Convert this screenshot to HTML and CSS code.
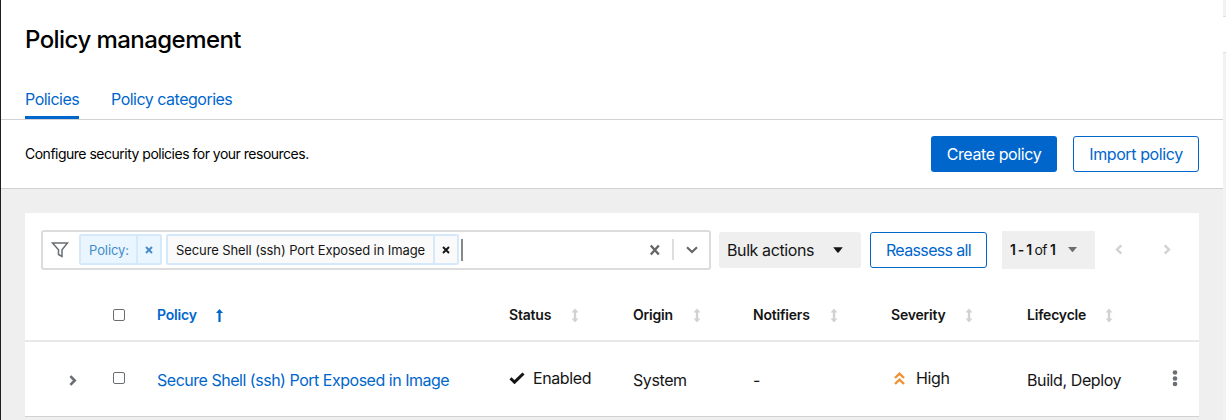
FILE: index.html
```html
<!DOCTYPE html>
<html lang="en">
<head>
<meta charset="utf-8">
<title>Policy management</title>
<link rel="stylesheet" href="styles.css">
</head>
<body>
<svg width="0" height="0" class="defs">
  <symbol id="sort" viewBox="0 0 8 15"><path d="M4 .5L7.500 4.500H5.200v6H7.500L4 14.500.5 10.500h2.300v-6H.5z"/></symbol>
</svg>
<div class="shell">
  <main class="page">
    <header class="head">
      <h1 class="title"><span>Policy management</span></h1>
      <nav class="tabs">
        <a class="tab active"><span class="t-policies">Policies</span></a>
        <a class="tab"><span class="t-cats">Policy categories</span></a>
      </nav>
    </header>
    <section class="intro">
      <p class="desc">Configure security policies for your resources.</p>
      <button class="btn primary">Create policy</button>
      <button class="btn outline import">Import policy</button>
    </section>
    <section class="body">
      <div class="card">
        <div class="toolbar">
          <div class="search">
            <svg class="funnel" width="18" height="16" viewBox="0 0 18 16"><path d="M1.500 1h15L11 7.700v6.800L7.500 12.500V7.700z" fill="none" stroke="#6a6e73" stroke-width="1.500"/></svg>
            <span class="chip cat"><span class="chip-text">Policy:</span><span class="chip-x"><svg width="8" height="8" viewBox="0 0 8 8"><path d="M1 1l6 6M7 1L1 7"/></svg></span></span>
            <span class="chip val"><span class="chip-text">Secure Shell (ssh) Port Exposed in Image</span><span class="chip-x"><svg width="8" height="8" viewBox="0 0 8 8"><path d="M1 1l6 6M7 1L1 7"/></svg></span></span>
            <span class="caret"></span>
            <svg class="clear" width="12" height="12" viewBox="0 0 12 12"><path d="M1.800 1.500l8 9M9.800 1.500l-8 9" stroke="#666" stroke-width="2.400"/></svg>
            <span class="sep"></span>
            <svg class="down" width="12" height="8" viewBox="0 0 12 8"><path d="M1 1.300l5 4.700 5-4.700" fill="none" stroke="#666" stroke-width="2.200"/></svg>
          </div>
          <button class="bulk"><span>Bulk actions</span><svg width="10" height="6" viewBox="0 0 10 6"><path d="M.2.300h9.600L5.600 5.500q-.6.600-1.200 0z" fill="#151515"/></svg></button>
          <button class="btn outline reassess">Reassess all</button>
          <button class="range"><span><b>1 - 1</b> of <b>1</b></span><svg width="9" height="5" viewBox="0 0 9 5"><path d="M0 0h9L5 4.700q-.5.500-1 0z" fill="#6a6e73"/></svg></button>
          <svg class="prev" width="8" height="11" viewBox="0 0 8 11"><path d="M6.300 1.300L2 5.500l4.300 4.200" fill="none" stroke="#d2d2d2" stroke-width="2.400"/></svg>
          <svg class="next" width="8" height="11" viewBox="0 0 8 11"><path d="M1.700 1.300L6 5.500 1.700 9.700" fill="none" stroke="#d2d2d2" stroke-width="2.400"/></svg>
        </div>
        <div class="row header">
          <span></span>
          <span class="box"></span>
          <span class="th sorted"><span class="h-policy">Policy</span><svg width="7" height="13" viewBox="0 0 7 13"><path d="M3.500 0L7 4H4.600v9H2.400V4H0z" fill="#06c"/></svg></span>
          <span class="th"><span class="h-status">Status</span><svg class="sort"><use href="#sort"/></svg></span>
          <span class="th"><span class="h-origin">Origin</span><svg class="sort"><use href="#sort"/></svg></span>
          <span class="th"><span class="h-notif">Notifiers</span><svg class="sort"><use href="#sort"/></svg></span>
          <span class="th"><span class="h-sev">Severity</span><svg class="sort"><use href="#sort"/></svg></span>
          <span class="th"><span class="h-life">Lifecycle</span><svg class="sort"><use href="#sort"/></svg></span>
          <span></span>
        </div>
        <div class="row item">
          <svg class="expand" width="8" height="11" viewBox="0 0 8 11"><path d="M1.400 1.200L5.700 5.500 1.400 9.800" fill="none" stroke="#6a6e73" stroke-width="2.600"/></svg>
          <span class="box raised"></span>
          <a class="name">Secure Shell (ssh) Port Exposed in Image</a>
          <span class="cell raised status"><svg width="16" height="12" viewBox="0 0 16 12"><path d="M1.500 6.200l4 4L14.500 1.500" fill="none" stroke="#151515" stroke-width="3"/></svg><span class="v-enabled">Enabled</span></span>
          <span class="v-system">System</span>
          <span>-</span>
          <span class="cell raised sev"><svg width="11" height="13" viewBox="0 0 11 13"><path d="M1 6l4.500-4.300L10 6M1 12l4.500-4.300L10 12" fill="none" stroke="#ef9234" stroke-width="2.400"/></svg><span class="v-high">High</span></span>
          <span class="v-life">Build, Deploy</span>
          <svg class="kebab" width="6" height="17" viewBox="0 0 6 17"><g fill="#6a6e73"><circle cx="3" cy="2.500" r="2.300"/><circle cx="3" cy="8.500" r="2.300"/><circle cx="3" cy="14" r="2.300"/></g></svg>
        </div>
      </div>
    </section>
  </main>
  <aside class="edge"><span class="handle"></span></aside>
</div>
</body>
</html>
```
FILE: styles.css
```css
* { box-sizing: border-box; }
body { margin: 0; font: 16px/24px Inter, "Open Sans", sans-serif; color: #151515; background: #fff; overflow: hidden; }
.defs { position: absolute; }
.shell { display: flex; height: 420px; border-left: 1px solid #1f1d27; }
.page { width: 1222px; display: flex; flex-direction: column; }
.edge { flex: 1; background: #f2f2f2; padding-top: 16px; }
.handle { display: block; height: 37px; background: #fff; border: solid #e0e0e0; border-width: 1px 0; }
svg { flex: none; display: block; }
button { font: inherit; padding: 0; border: 0; background: none; white-space: nowrap; }

.head { height: 120px; border-bottom: 1px solid #d2d2d2; padding: 24px 24px 0; display: flex; flex-direction: column; justify-content: space-between; }
.title { margin: 0; font-size: 24px; line-height: 32px; font-weight: 500; color: #000; letter-spacing: -.56px; }
.tabs { display: flex; gap: 32px; }
.tab { height: 32px; color: #06c; white-space: nowrap; }
.active { border-bottom: 3px solid #06c; width: 54px; }
.t-policies, .t-cats { letter-spacing: -.5px; }

.intro { height: 69px; border-bottom: 1px solid #d2d2d2; padding: 0 24px; display: flex; align-items: center; gap: 16px; }
.desc { margin: 0; flex: 1; font-size: 14px; letter-spacing: -.5px; color: #000; }
.btn { height: 36px; border-radius: 3px; font-size: 16px; letter-spacing: -.4px; }
.primary { width: 126px; background: #06c; color: #fff; }
.outline { color: #06c; border: 1px solid #06c; background: #fff; }
.import { width: 126px; }

.body { flex: 1; background: #efefef; padding: 24px 24px 0; }
.card { background: #fff; border-bottom: 1px solid #d2d2d2; height: 204px; }
.toolbar { display: flex; align-items: center; height: 76px; padding: 0 0 3px 16px; }
.search { width: 670px; height: 40px; border: 2px solid #dcdcdc; border-radius: 3px; display: flex; align-items: center; padding-left: 8px; }
.chip { height: 31px; display: flex; border: 2px solid #d6e9fa; border-radius: 2px; font-size: 13px; line-height: 28px; white-space: nowrap; }
.chip-text { flex: 1; padding-left: 8px; border-right: 2px solid #d6e9fa; }
.chip-x { width: 22px; display: grid; place-items: center; }
.chip-x path { stroke: currentColor; stroke-width: 1.900; }
.cat { width: 83px; margin: 0 4px 0 10px; background: #e9f5ff; color: #438bc9; letter-spacing: -.1px; }
.val { width: 293px; background: #fafafa; color: #151515; letter-spacing: -.1px; }
.caret { width: 2px; height: 22px; margin-left: 2px; background: #888; }
.clear { margin-left: auto; }
.sep { width: 2px; height: 21px; background: #dedede; margin: 0 12px 0 11px; }
.down { margin-right: 11px; }
.bulk { width: 142px; height: 36px; margin-left: 8px; padding: 0 18px 0 8px; background: #efefef; border-radius: 3px; display: flex; align-items: center; justify-content: space-between; color: #151515; letter-spacing: -.4px; }
.reassess { width: 117px; margin-left: 9px; letter-spacing: -.65px; }
.range { width: 93px; height: 38px; margin-left: 15px; padding: 0 18px 0 8px; background: #efefef; display: flex; align-items: center; justify-content: space-between; font-size: 14px; letter-spacing: -.6px; word-spacing: -.4px; color: #151515; }
.range b { font-weight: 600; }
.prev { margin-left: 20px; }
.next { margin-left: 40px; }

.row { display: grid; grid-template-columns: 88px 44px 352px 124px 120px 138px 136px 132px 1fr; align-items: center; white-space: nowrap; }
.header { height: 53px; padding-top: 1px; border-bottom: 2px solid #e8e8e8; font-size: 14px; font-weight: 600; }
.th { display: flex; align-items: center; }
.th > span { letter-spacing: -.2px; }
.sorted { color: #06c; }
.h-policy { width: 59px; }
.h-status { width: 62px; }
.h-origin { width: 60px; }
.h-notif { width: 77px; }
.h-sev { width: 74px; }
.h-life { width: 78px; }
.sort { width: 8px; height: 15px; fill: #d2d2d2; }
.box { width: 12px; height: 12px; border: 1px solid #6a6e73; border-radius: 2px; }
.item { height: 73px; padding-top: 3px; letter-spacing: -.4px; }
.expand { margin-left: 44px; }
.name { color: #06c; letter-spacing: -.48px; }
.raised { position: relative; top: -2px; }
.cell { display: flex; align-items: center; }
.status { gap: 8px; }
.sev { padding-left: 3px; gap: 11px; }
.kebab { margin-left: 13px; position: relative; top: -2px; }
```
